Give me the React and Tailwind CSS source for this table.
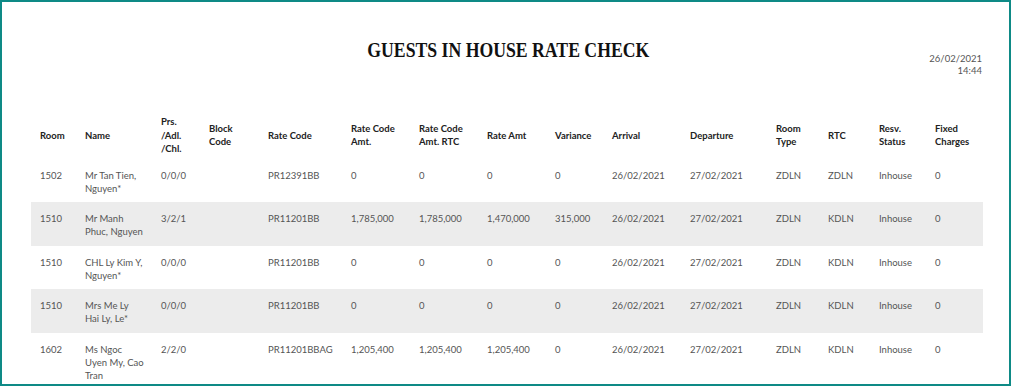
import React from "react";

const cols = "grid grid-cols-[45px_76px_48px_59px_83px_68px_68px_68px_57px_78px_86px_52px_51px_56px_57px]";

const headers = [
  ["Room"],
  ["Name"],
  ["Prs.", "/Adl.", "/Chl."],
  ["Block", "Code"],
  ["Rate Code"],
  ["Rate Code", "Amt."],
  ["Rate Code", "Amt. RTC"],
  ["Rate Amt"],
  ["Variance"],
  ["Arrival"],
  ["Departure"],
  ["Room", "Type"],
  ["RTC"],
  ["Resv.", "Status"],
  ["Fixed", "Charges"],
];

const rows = [
  ["1502", ["Mr Tan Tien,", "Nguyen*"], "0/0/0", "", "PR12391BB", "0", "0", "0", "0", "26/02/2021", "27/02/2021", "ZDLN", "ZDLN", "Inhouse", "0"],
  ["1510", ["Mr Manh", "Phuc, Nguyen"], "3/2/1", "", "PR11201BB", "1,785,000", "1,785,000", "1,470,000", "315,000", "26/02/2021", "27/02/2021", "ZDLN", "KDLN", "Inhouse", "0"],
  ["1510", ["CHL Ly Kim Y,", "Nguyen*"], "0/0/0", "", "PR11201BB", "0", "0", "0", "0", "26/02/2021", "27/02/2021", "ZDLN", "KDLN", "Inhouse", "0"],
  ["1510", ["Mrs Me Ly", "Hai Ly, Le*"], "0/0/0", "", "PR11201BB", "0", "0", "0", "0", "26/02/2021", "27/02/2021", "ZDLN", "KDLN", "Inhouse", "0"],
  ["1602", ["Ms Ngoc", "Uyen My, Cao", "Tran"], "2/2/0", "", "PR11201BBAG", "1,205,400", "1,205,400", "1,205,400", "0", "26/02/2021", "27/02/2021", "ZDLN", "KDLN", "Inhouse", "0"],
];

export default function App() {
  return (
    <div className="w-[1011px] h-[386px] overflow-hidden bg-white border-2 border-[#0e8a86] pl-[29px] pr-[24px] pt-[36px] font-['Lato',sans-serif]">
      <div className="grid grid-cols-[1fr_auto_1fr]">
        <div />
        <div className="font-['Liberation_Serif',serif] font-bold text-[20px] leading-[24px] text-[#111] scale-x-[0.885] origin-center">
          GUESTS IN HOUSE RATE CHECK
        </div>
        <div className="justify-self-end pt-[15px] pr-[3px] text-right text-[9.5px] leading-[12px] text-[#555]">
          <div>26/02/2021</div>
          <div>14:44</div>
        </div>
      </div>

      <div className="mt-[28px] w-[952px] text-[9.5px]">
        <div className={`${cols} pt-[10px] pb-[3px] items-center font-bold text-[#222] leading-[13.5px]`}>
          {headers.map((h, i) => (
            <div key={i} className="pl-[9px]">
              {h.map((l, j) => (
                <div key={j}>{l}</div>
              ))}
            </div>
          ))}
        </div>
        {rows.map((r, ri) => (
          <div
            key={ri}
            className={`${cols} pt-[10px] pb-[7.5px] leading-[13px] text-[#555] ${ri % 2 === 1 ? "bg-[#ececec]" : "bg-white"}`}
          >
            {r.map((c, ci) => (
              <div key={ci} className="pl-[9px]">
                {Array.isArray(c) ? c.map((l, j) => <div key={j}>{l}</div>) : c}
              </div>
            ))}
          </div>
        ))}
      </div>
    </div>
  );
}
